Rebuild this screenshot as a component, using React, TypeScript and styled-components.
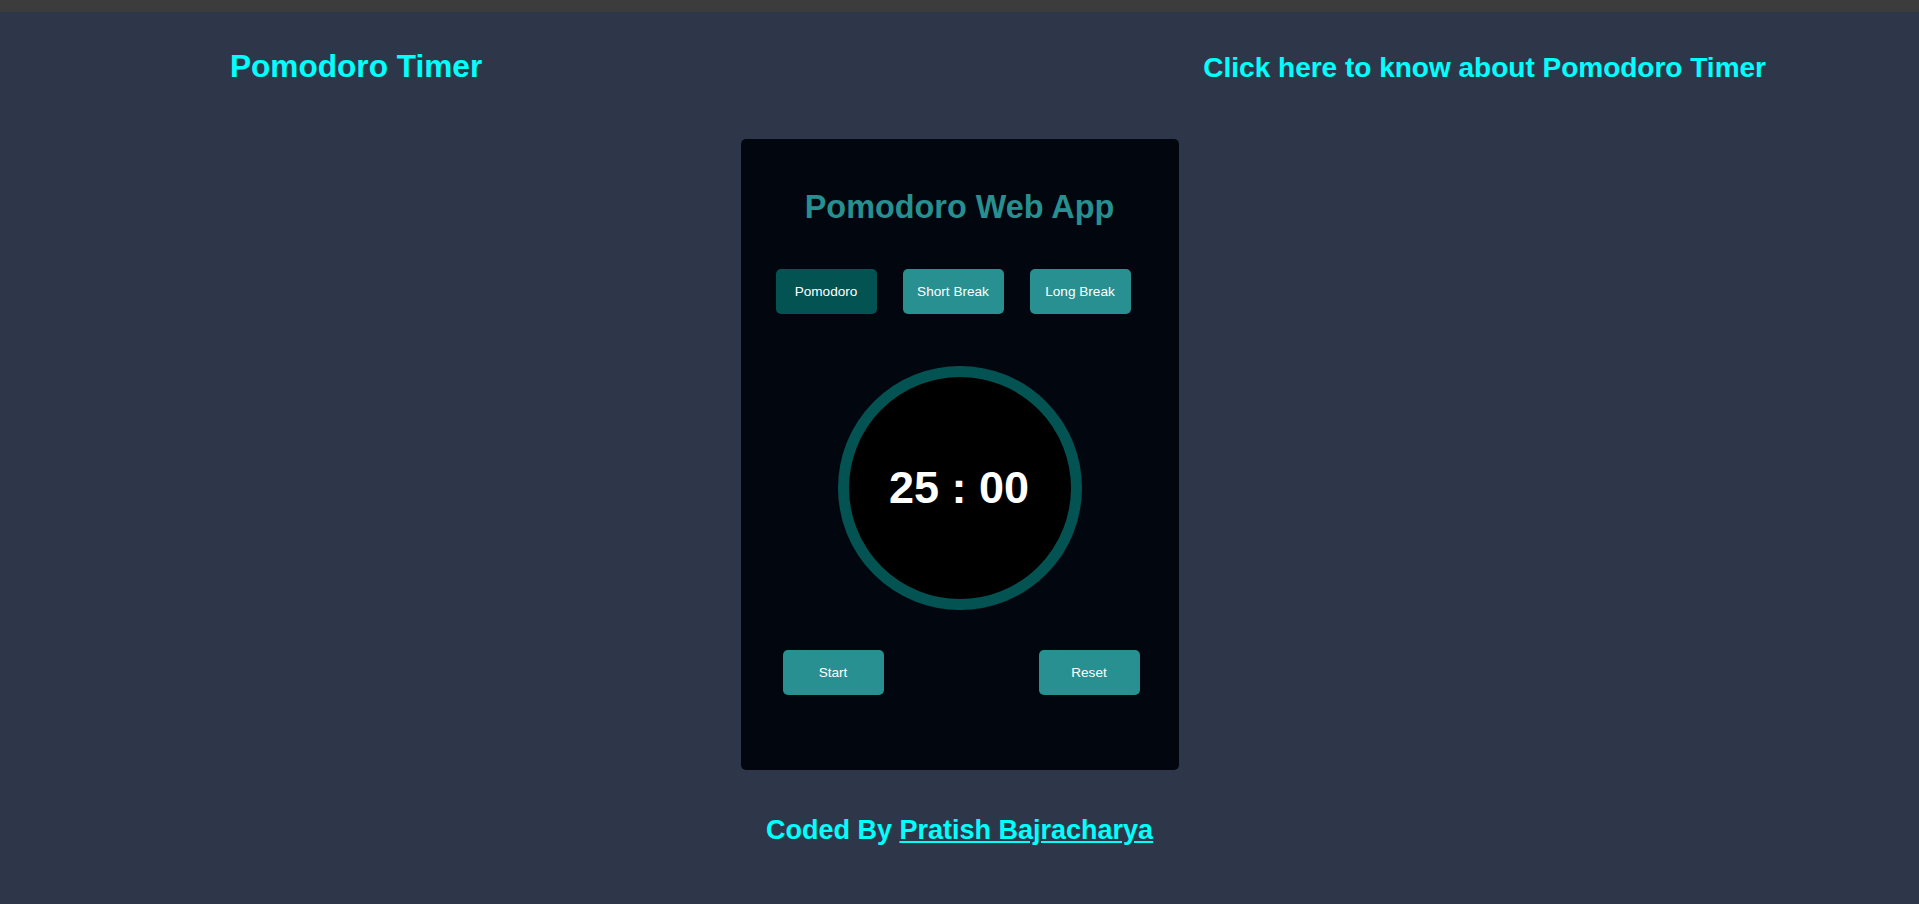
import React from "react";
import styled, { createGlobalStyle } from "styled-components";

const GlobalStyle = createGlobalStyle`
  html, body {
    margin: 0;
    padding: 0;
    background: #2e3749;
    font-family: "Liberation Sans", Arial, sans-serif;
  }
  body {
    min-height: 904px;
  }
`;

const Page = styled.div`
  min-height: 904px;
  background: #2e3749;
  border-top: 12px solid #3c3c3c;
  box-sizing: border-box;
  display: flex;
  flex-direction: column;
  align-items: center;
`;

const Header = styled.header`
  width: 100%;
  box-sizing: border-box;
  display: flex;
  justify-content: space-between;
  align-items: baseline;
  padding: 0 153px 0 230px;
  margin-top: 36px;
`;

const SiteTitle = styled.h1`
  margin: 0;
  font-size: 31.6px;
  font-weight: 700;
  color: #00ffff;
`;

const InfoLink = styled.a`
  font-size: 28px;
  font-weight: 700;
  color: #00ffff;
  text-decoration: none;
`;

const Card = styled.main`
  margin-top: 54px;
  width: 438px;
  height: 631px;
  box-sizing: border-box;
  background: #02060e;
  border-radius: 5px;
  display: flex;
  flex-direction: column;
  align-items: center;
  padding-top: 50px;
`;

const AppTitle = styled.h2`
  margin: 0;
  font-size: 32.4px;
  font-weight: 700;
  color: #278f90;
`;

const ModeRow = styled.div`
  align-self: stretch;
  display: flex;
  gap: 26px;
  padding-left: 35px;
  margin-top: 43px;
`;

const Btn = styled.button<{ $active?: boolean }>`
  width: 101px;
  height: 45px;
  border: none;
  border-radius: 5px;
  background: ${(p) => (p.$active ? "#035353" : "#289090")};
  color: #ffffff;
  font-family: "Liberation Sans", Arial, sans-serif;
  font-size: 13.6px;
  cursor: pointer;
  padding: 0;
`;

const Ring = styled.div`
  margin-top: 52px;
  width: 244px;
  height: 244px;
  box-sizing: border-box;
  border: 11px solid #035353;
  border-radius: 50%;
  background: #000000;
  display: flex;
  align-items: center;
  justify-content: center;
`;

const Time = styled.div`
  color: #ffffff;
  font-size: 45px;
  font-weight: 700;
  margin-left: -1px;
`;

const ControlRow = styled.div`
  align-self: stretch;
  display: flex;
  justify-content: space-between;
  padding: 0 39px 0 42px;
  margin-top: 40px;
`;

const Footer = styled.footer`
  margin-top: 45px;
  font-size: 27px;
  font-weight: 700;
  color: #00ffff;
`;

const FooterLink = styled.a`
  color: #00ffff;
  text-decoration: underline;
`;

export default function App() {
  return (
    <>
      <GlobalStyle />
      <Page>
        <Header>
          <SiteTitle>Pomodoro Timer</SiteTitle>
          <InfoLink href="#">Click here to know about Pomodoro Timer</InfoLink>
        </Header>
        <Card>
          <AppTitle>Pomodoro Web App</AppTitle>
          <ModeRow>
            <Btn $active>Pomodoro</Btn>
            <Btn>Short Break</Btn>
            <Btn>Long Break</Btn>
          </ModeRow>
          <Ring>
            <Time>25 : 00</Time>
          </Ring>
          <ControlRow>
            <Btn>Start</Btn>
            <Btn>Reset</Btn>
          </ControlRow>
        </Card>
        <Footer>
          Coded By <FooterLink href="#">Pratish Bajracharya</FooterLink>
        </Footer>
      </Page>
    </>
  );
}
